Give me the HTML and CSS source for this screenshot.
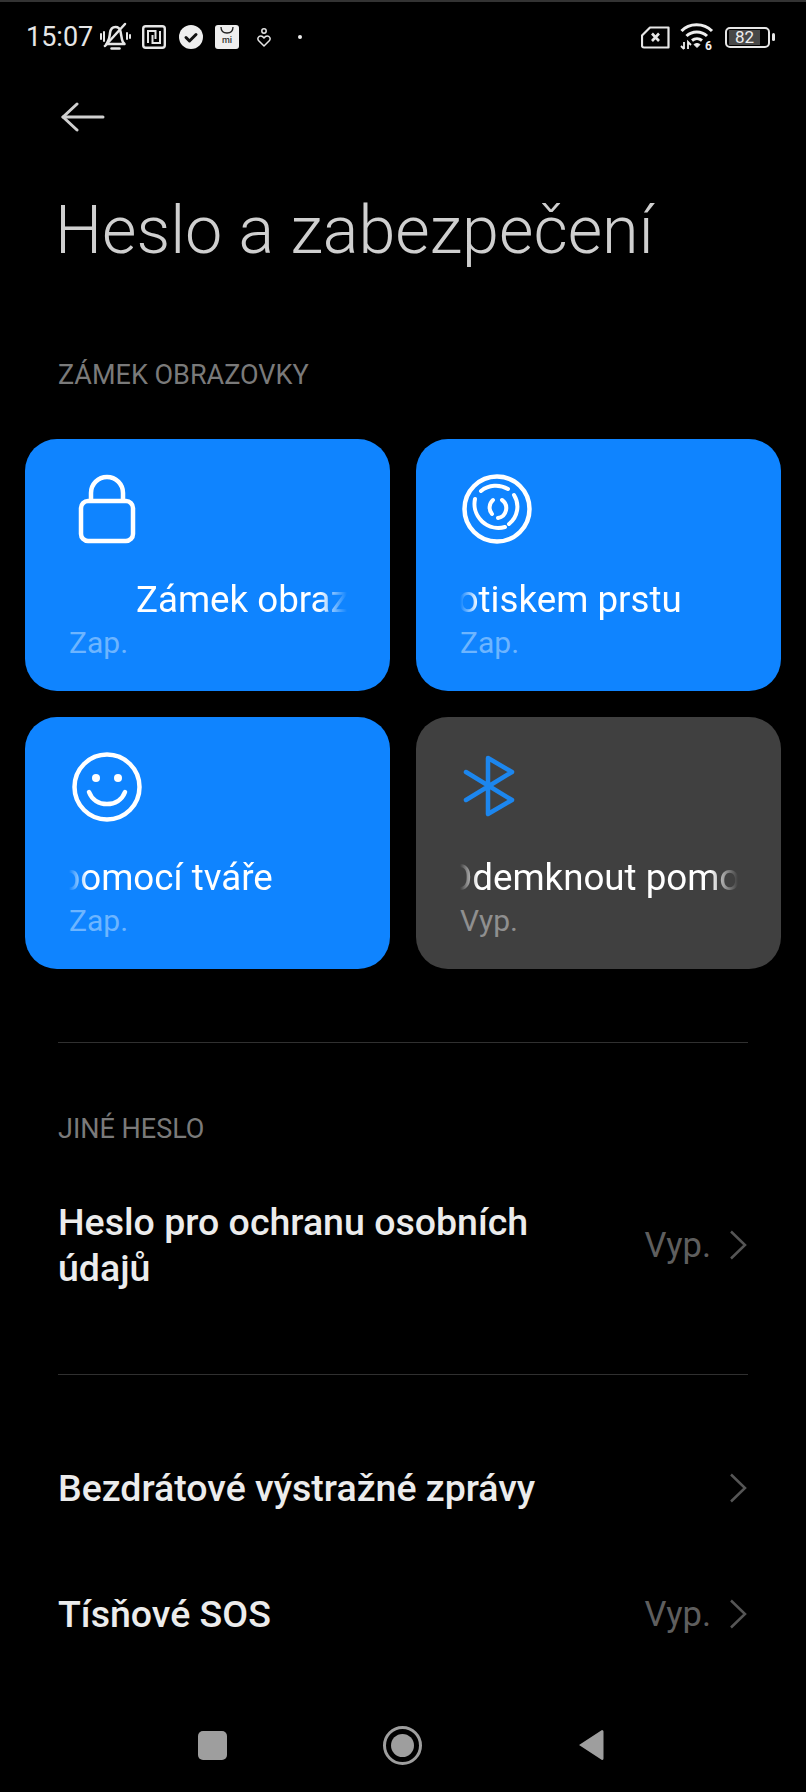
FILE: index.html
```html
<!DOCTYPE html>
<html lang="cs">
<head>
  <meta charset="UTF-8">
  <meta name="viewport" content="width=device-width, initial-scale=1.0">
  <title>Heslo a zabezpečení</title>
  <link rel="stylesheet" href="styles.css">
</head>
<body>
  <div class="screen">

    <!-- Status bar -->
    <div class="status-bar">
      <div class="status-left">
        <span class="clock">15:07</span>
        <svg class="ic-bell" width="32" height="30" viewBox="0 0 32 30" fill="none" stroke="#e6e6e6" stroke-width="2.500" stroke-linecap="round" stroke-linejoin="round">
          <path d="M9 19c1.500-2 1.500-4 2-8 .5-4 2.500-6 5.500-6 2.500 0 4.500 2 5 4.500l1.500 8c.3 2 1 3 2.500 4.500H7.500z"/>
          <path d="M12.500 26.500h8"/>
          <path d="M6 24 26 2"/>
          <path d="M2 12v5M5 10v9M28 11v6M31 13v3" stroke-width="2"/>
        </svg>
        <svg class="ic-nfc" width="24" height="24" viewBox="0 0 24 24" fill="none" stroke="#e6e6e6" stroke-width="2">
          <rect x="1.200" y="1.200" width="21.600" height="21.600" rx="2.500" stroke-width="2.400"/>
          <path d="M6 18V6h7.500v8"/>
          <path d="M18 6v12h-7.500v-8"/>
        </svg>
        <svg class="ic-check" width="24" height="24" viewBox="0 0 24 24">
          <circle cx="12" cy="12" r="12" fill="#eee"/>
          <path d="M7 12.500l3.500 3.500 6.500-6.500" fill="none" stroke="#111" stroke-width="3" stroke-linecap="round" stroke-linejoin="round"/>
        </svg>
        <svg class="ic-store" width="24" height="24" viewBox="0 0 24 24">
          <rect width="24" height="24" rx="3" fill="#eee"/>
          <path d="M6 2c0 4 2.500 6 6 6s6-2 6-6" fill="none" stroke="#222" stroke-width="1.300"/>
          <text x="12" y="18" text-anchor="middle" class="ic-store-text">mi</text>
        </svg>
        <svg class="ic-heart" width="14" height="19" viewBox="0 0 14 19" fill="none" stroke="#e6e6e6" stroke-width="1.500" stroke-linejoin="round">
          <circle cx="7" cy="3" r="2.200"/>
          <path d="M7 18 1.500 12.500C0 10.500 1.500 8 3.800 8 5.500 8 6.300 9 7 10c.7-1 1.500-2 3.200-2 2.300 0 3.800 2.500 2.300 4.500z"/>
        </svg>
        <span class="status-dot"></span>
      </div>
      <div class="status-right">
        <svg class="ic-sim" width="29" height="23" viewBox="0 0 29 23" fill="none" stroke="#e6e6e6" stroke-width="2.200" stroke-linejoin="round">
          <path d="M9 1.500h18.500v20H3a2 2 0 0 1-2-2v-10z"/>
          <path d="M11 7.500l7 7.500M18 7.500l-7 7.500" stroke-width="2.600"/>
        </svg>
        <svg class="ic-wifi" width="34" height="32" viewBox="0 0 34 32" fill="none" stroke="#eee" stroke-width="3">
          <path d="M1.500 10C9 1.500 24 1.500 32 10"/>
          <path d="M6.500 15c5.500-5.500 15-5.500 20.500 0"/>
          <path d="M12 19.500c3-2.500 7-2.500 10 0"/>
          <path d="M14 23.500l3 3 3-3c-2-1.300-4-1.300-6 0z" fill="#eee" stroke-width="1"/>
          <path d="M4 28v-7M1 25l3 3M8 28v-7l3 3" stroke-width="1.800"/>
          <text x="25" y="29" class="ic-wifi-text">6</text>
        </svg>
        <div class="battery">
          <div class="battery-body"><span class="battery-level">82</span></div>
          <span class="battery-nub"></span>
        </div>
      </div>
    </div>

    <!-- App bar -->
    <div class="app-bar">
      <svg width="44" height="30" viewBox="0 0 44 30" fill="none" stroke="#d0d0d0" stroke-width="3" stroke-linecap="round" stroke-linejoin="round">
        <path d="M2 15h40"/>
        <path d="M16 2 2 15l14 13"/>
      </svg>
    </div>

    <h1 class="page-title">Heslo a zabezpečení</h1>

    <div class="section-label first">ZÁMEK OBRAZOVKY</div>

    <!-- Unlock cards -->
    <div class="card-grid">
      <div class="card on">
        <div class="card-icon">
          <svg class="lock" width="60" height="70" viewBox="0 0 60 70" fill="none" stroke="#fff" stroke-width="4.500">
            <rect x="4" y="27" width="52" height="40" rx="7"/>
            <path d="M14 27V19a16 16 0 0 1 32 0v8"/>
          </svg>
        </div>
        <div class="marquee"><span class="marquee-text pos-a">Zámek obrazovky</span></div>
        <div class="card-state">Zap.</div>
      </div>

      <div class="card on">
        <div class="card-icon">
          <svg class="print" width="70" height="70" viewBox="0 0 70 70" fill="none" stroke="#fff" stroke-width="4" stroke-linecap="round">
            <circle cx="35" cy="35" r="32.500" stroke-width="4.500"/>
            <path d="M19 17A24 24 0 0 1 46 15"/>
            <path d="M52 21A22 22 0 0 1 47 50"/>
            <path d="M43 53A24 24 0 0 1 13 25"/>
            <path d="M31 26A10 10 0 0 0 30 40"/>
            <path d="M40 26A10 10 0 0 1 36 44"/>
          </svg>
        </div>
        <div class="marquee"><span class="marquee-text pos-b">Odemknout otiskem prstu</span></div>
        <div class="card-state">Zap.</div>
      </div>

      <div class="card on">
        <div class="card-icon">
          <svg class="face" width="70" height="70" viewBox="0 0 70 70" fill="none" stroke="#fff" stroke-width="4.500" stroke-linecap="round">
            <circle cx="35" cy="35" r="32.500"/>
            <circle cx="24" cy="26" r="4" fill="#fff" stroke="none"/>
            <circle cx="46" cy="26" r="4" fill="#fff" stroke="none"/>
            <path d="M17 40c3 8 10 12 18 12s15-4 18-12"/>
          </svg>
        </div>
        <div class="marquee"><span class="marquee-text pos-c">Odemknout pomocí tváře</span></div>
        <div class="card-state">Zap.</div>
      </div>

      <div class="card off">
        <div class="card-icon">
          <svg class="bt" width="54" height="66" viewBox="0 0 54 66" fill="none" stroke="#1c86ee" stroke-width="4.500" stroke-linecap="round" stroke-linejoin="round">
            <path d="M3 19 49 47 25 61V5l24 14L3 47"/>
          </svg>
        </div>
        <div class="marquee"><span class="marquee-text pos-d">Odemknout pomocí Bluetooth</span></div>
        <div class="card-state">Vyp.</div>
      </div>
    </div>

    <div class="divider first"></div>

    <div class="section-label second">JINÉ HESLO</div>

    <div class="row tall">
      <div class="row-title">Heslo pro ochranu osobních údajů</div>
      <span class="row-value">Vyp.</span>
      <svg class="chevron" width="18" height="30" viewBox="0 0 18 30" fill="none" stroke="#555" stroke-width="2.500"><path d="M2 1.500 16 15 2 28.500"/></svg>
    </div>

    <div class="divider second"></div>

    <div class="row plain top">
      <div class="row-title">Bezdrátové výstražné zprávy</div>
      <svg class="chevron" width="18" height="30" viewBox="0 0 18 30" fill="none" stroke="#555" stroke-width="2.500"><path d="M2 1.500 16 15 2 28.500"/></svg>
    </div>

    <div class="row plain">
      <div class="row-title">Tísňové SOS</div>
      <span class="row-value">Vyp.</span>
      <svg class="chevron" width="18" height="30" viewBox="0 0 18 30" fill="none" stroke="#555" stroke-width="2.500"><path d="M2 1.500 16 15 2 28.500"/></svg>
    </div>

    <!-- Navigation bar -->
    <div class="nav-bar">
      <span class="nav-square"></span>
      <span class="nav-home"></span>
      <svg width="28" height="34" viewBox="0 0 28 34"><path d="M25 2 2 17l23 15a1.500 1.500 0 0 0 1.500-1.500v-27A1.500 1.500 0 0 0 25 2z" fill="#9e9e9e"/></svg>
    </div>
  </div>
</body>
</html>
```

FILE: styles.css
```css
* {
  box-sizing: border-box;
}

body {
  margin: 0;
  background-color: black;
  color: #f0f0f0;
  font-family: Roboto, "Liberation Sans", sans-serif;
  overflow: hidden;
}

.screen {
  width: 806px;
  height: 1792px;
  display: flex;
  flex-direction: column;
  border-top: 2px solid #333;
}

/* Status bar */
.status-bar {
  height: 68px;
  padding: 2px 31px 0 26px;
  display: flex;
  justify-content: space-between;
  align-items: center;
}

.status-left,
.status-right {
  display: flex;
  align-items: center;
}

.clock {
  font-size: 27px;
  color: #e6e6e6;
}

.ic-bell { margin-left: 6px; }
.ic-nfc { margin-left: 11px; }
.ic-check { margin-left: 13px; }
.ic-store { margin-left: 12px; }
.ic-heart { margin-left: 18px; }

.ic-store-text {
  font-size: 9px;
  font-weight: 500;
  fill: #333;
}

.ic-wifi-text {
  font-size: 12px;
  font-weight: 700;
  fill: #eee;
  stroke: none;
}

.status-dot {
  width: 4px;
  height: 4px;
  margin-left: 27px;
  border-radius: 50%;
  background: #eee;
}

.ic-wifi { margin-left: 10px; }

.battery {
  margin-left: 11px;
  display: flex;
  align-items: center;
}

.battery-body {
  width: 45px;
  height: 21px;
  padding: 1px 2px;
  border: 2px solid #e6e6e6;
  border-radius: 5px;
  display: flex;
  justify-content: flex-start;
}

.battery-level {
  width: 31px;
  height: 15px;
  background: #484848;
  font-size: 17px;
  line-height: 15px;
  text-align: center;
  color: #eee;
}

.battery-nub {
  width: 3px;
  height: 8px;
  margin-left: 2px;
  border-radius: 2px;
  background: #e6e6e6;
}

/* App bar and title */
.app-bar {
  height: 94px;
  padding-left: 61px;
  display: flex;
  align-items: center;
}

.page-title {
  margin: 26px 0 0 55px;
  font-size: 66.500px;
  line-height: 80px;
  font-weight: 300;
  color: #cfcfcf;
}

.section-label {
  margin-left: 58px;
  font-size: 27px;
  line-height: 30px;
  color: #7a7a7a;
}

.section-label.first { margin-top: 90px; }
.section-label.second { margin-top: 71px; }

/* Unlock cards */
.card-grid {
  margin: 49px 25px 0;
  display: grid;
  grid-template-columns: 365px 365px;
  gap: 26px 26px;
}

.card {
  height: 252px;
  padding: 34px 44px 0;
  border-radius: 32px;
}

.card.on { background: #0f84ff; }
.card.off { background: #404040; }

.card-icon {
  height: 72px;
  display: flex;
  align-items: center;
}

.card-icon .lock { margin-left: 8px; }
.card-icon .print { margin-left: 2px; }
.card-icon .face { margin-left: 3px; }
.card-icon .bt { margin-left: 3px; margin-top: -2px; }

.marquee {
  margin-top: 33px;
  width: 280px;
  overflow: hidden;
  white-space: nowrap;
  font-size: 36.700px;
  line-height: 44px;
  color: #fff;
  -webkit-mask-image: linear-gradient(to right, transparent, #000 18px, #000 250px, transparent 278px);
  mask-image: linear-gradient(to right, transparent, #000 18px, #000 250px, transparent 278px);
}

.marquee-text { display: inline-block; }
.pos-a { margin-left: 67px; }
.pos-b { margin-left: -201px; }
.pos-c { margin-left: -208px; }
.pos-d { margin-left: -13px; }

.card-state {
  margin-top: 3px;
  font-size: 30px;
  line-height: 36px;
}

.card.on .card-state { color: #6db5ff; }
.card.off .card-state { color: #8f8f8f; }

.divider {
  margin: 0 58px;
  height: 1px;
  background: #303030;
}

.divider.first { margin-top: 73px; }
.divider.second { margin-top: 69px; }

/* List rows */
.row {
  padding: 0 59px 0 58px;
  display: flex;
  align-items: center;
}

.row.tall {
  margin-top: 41px;
  height: 120px;
}

.row.plain { height: 126px; }
.row.plain.top { margin-top: 50px; }

.row-title {
  flex: 1;
  font-size: 37.500px;
  line-height: 46px;
  font-weight: 500;
  color: #ececec;
}

.row.tall .row-title {
  max-width: 500px;
}

.row-value {
  margin-left: auto;
  margin-right: 18px;
  font-size: 34.500px;
  color: #5e5e5e;
}

/* Navigation bar */
.nav-bar {
  margin-top: auto;
  height: 94px;
  padding: 0 201px 0 198px;
  display: flex;
  justify-content: space-between;
  align-items: center;
}

.nav-square {
  width: 29px;
  height: 29px;
  border-radius: 5px;
  background: #9e9e9e;
}

.nav-home {
  position: relative;
  width: 39px;
  height: 39px;
  border: 3px solid #9e9e9e;
  border-radius: 50%;
}

.nav-home::after {
  content: "";
  position: absolute;
  top: 5px;
  left: 5px;
  width: 23px;
  height: 23px;
  border-radius: 50%;
  background: #9e9e9e;
}
```
